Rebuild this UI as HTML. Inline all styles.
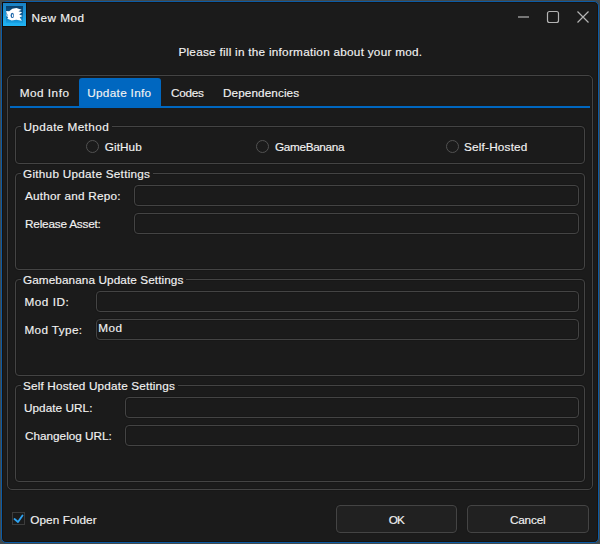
<!DOCTYPE html>
<html><head><meta charset="utf-8">
<style>
html,body{margin:0;padding:0;}
body{width:600px;height:544px;background:#414a4e;position:relative;overflow:hidden;font-family:"Liberation Sans",sans-serif;font-size:11.75px;color:#f2f2f2;-webkit-text-stroke:0.15px #f2f2f2;}
.win{position:absolute;left:1px;top:1px;width:598px;height:542px;box-sizing:border-box;border:1px solid #0b5ba6;border-radius:5px;background:#1b1b1b;box-shadow:inset 0 0 0 1px #18130e;}
.a{position:absolute;}
.t{position:absolute;line-height:14px;white-space:nowrap;}
.gb{position:absolute;box-sizing:border-box;border:1px solid #444444;border-radius:4px;box-shadow:0 0 0 1px #181818, inset 0 0 0 1px #181818;}
.gh{position:absolute;background:#1b1b1b;line-height:14px;white-space:nowrap;padding:0 3px 0 2px;}
.tb{position:absolute;box-sizing:border-box;border:1px solid #444444;border-radius:4px;background:#1b1b1b;box-shadow:0 0 0 1px #181818, inset 0 0 0 1px #181818;}
.rb{position:absolute;box-sizing:border-box;width:13px;height:13px;border:1.2px solid #525252;border-radius:50%;}
.btn{position:absolute;box-sizing:border-box;border:1px solid #444444;border-radius:4px;background:#212121;box-shadow:0 0 1px 0 #141414;}
</style></head><body>
<div class="win"></div>

<svg class="a" style="left:2px;top:2px" width="25" height="25" viewBox="0 0 25 25">
  <defs><linearGradient id="ig" x1="0" y1="0" x2="0" y2="1">
    <stop offset="0" stop-color="#0a3e68"/><stop offset="0.5" stop-color="#0f5f98"/><stop offset="1" stop-color="#18a4e8"/></linearGradient>
  <linearGradient id="fg" x1="0" y1="0" x2="0" y2="1">
    <stop offset="0" stop-color="#1a7fc2"/><stop offset="1" stop-color="#20b4f4"/></linearGradient></defs>
  <rect x="0" y="0" width="25" height="25" fill="#120c0a"/>
  <rect x="1" y="1" width="23" height="23" fill="url(#fg)"/>
  <rect x="4" y="4" width="17" height="17" fill="url(#ig)"/>
  <path d="M4.1 9.1 L7.2 9.3 L10.3 6.7 L14.4 6 L19.6 7.7 L16.5 9.3 L20.1 10.3 L17.2 12.4 L20.6 13.9 L17.7 15.3 L19.9 18.7 L14.4 17.7 L9.6 18.4 L5.3 16.8 L6.2 15.3 L4.8 13.9 L4.6 11.5 Z" fill="#ffffff"/>
  <ellipse cx="5.2" cy="13.2" rx="0.9" ry="1.5" fill="#9cc8e8"/>
  <ellipse cx="10.3" cy="13.4" rx="1.7" ry="2.6" fill="#1a64a8"/>
  <ellipse cx="10.6" cy="13.7" rx="0.7" ry="1.4" fill="#ffffff"/>
</svg>
<div class="t" id="t1" style="left:31.60px;top:11px;letter-spacing:0.467px;">New Mod</div>

<svg class="a" style="left:510px;top:5px" width="90" height="25" viewBox="0 0 90 25">
  <line x1="8" y1="12" x2="19" y2="12" stroke="#b4b4b4" stroke-width="1.2"/>
  <rect x="37.5" y="6.5" width="11" height="11" rx="2" fill="none" stroke="#b4b4b4" stroke-width="1.2"/>
  <path d="M67.5 6.5 L78.5 17.5 M78.5 6.5 L67.5 17.5" stroke="#b4b4b4" stroke-width="1.2" fill="none"/>
</svg>

<div class="t" id="t2" style="left:178.40px;top:45px;letter-spacing:0.262px;">Please fill in the information about your mod.</div>

<div class="a" style="left:7px;top:75px;width:586px;height:415px;box-sizing:border-box;border:1px solid #444444;border-radius:5px;box-shadow:0 0 0 1px #181818, inset 0 0 0 1px #181818;"></div>
<div class="a" style="left:79px;top:78px;width:82px;height:30px;background:#0067c0;border-radius:3px 3px 0 0;"></div>
<div class="a" style="left:10px;top:106px;width:580px;height:2px;background:#0067c0;"></div>
<div class="t" id="t3" style="left:19.80px;top:86px;letter-spacing:0.486px;">Mod Info</div>
<div class="t" id="t4" style="left:87.20px;top:86px;letter-spacing:0.320px;">Update Info</div>
<div class="t" id="t5" style="left:171.00px;top:86px;letter-spacing:-0.250px;">Codes</div>
<div class="t" id="t6" style="left:223.00px;top:86px;letter-spacing:0.091px;">Dependencies</div>

<div class="gb" style="left:15px;top:126px;width:570px;height:38px;"></div>
<div class="gh" id="t7" style="left:21.40px;top:120px;letter-spacing:0.413px;">Update Method</div>
<div class="rb" style="left:86px;top:140px;"></div>
<div class="t" id="t8" style="left:104.80px;top:140px;letter-spacing:0.060px;">GitHub</div>
<div class="rb" style="left:256px;top:140px;"></div>
<div class="t" id="t9" style="left:275.00px;top:140px;letter-spacing:-0.333px;">GameBanana</div>
<div class="rb" style="left:446px;top:140px;"></div>
<div class="t" id="t10" style="left:464.00px;top:140px;letter-spacing:0.200px;">Self-Hosted</div>

<div class="gb" style="left:15px;top:173px;width:570px;height:97px;"></div>
<div class="gh" id="t11" style="left:21.00px;top:167px;letter-spacing:0.262px;">Github Update Settings</div>
<div class="t" id="t12" style="left:25.00px;top:189px;letter-spacing:0.233px;">Author and Repo:</div>
<div class="tb" style="left:134px;top:185px;width:445px;height:21px;"></div>
<div class="t" id="t13" style="left:25.00px;top:217px;letter-spacing:-0.192px;">Release Asset:</div>
<div class="tb" style="left:134px;top:213px;width:445px;height:21px;"></div>

<div class="gb" style="left:15px;top:279px;width:570px;height:97px;"></div>
<div class="gh" id="t14" style="left:21.00px;top:273px;letter-spacing:0.090px;">Gamebanana Update Settings</div>
<div class="t" id="t15" style="left:24.40px;top:295px;letter-spacing:0.533px;">Mod ID:</div>
<div class="tb" style="left:96px;top:291px;width:483px;height:21px;"></div>
<div class="t" id="t16" style="left:24.40px;top:323px;letter-spacing:0.387px;">Mod Type:</div>
<div class="tb" style="left:96px;top:319px;width:483px;height:21px;"></div>
<div class="t" id="t17" style="left:98.20px;top:321px;letter-spacing:0.550px;">Mod</div>

<div class="gb" style="left:15px;top:385px;width:570px;height:97px;"></div>
<div class="gh" id="t18" style="left:21.00px;top:379px;letter-spacing:0.163px;">Self Hosted Update Settings</div>
<div class="t" id="t19" style="left:24.00px;top:401px;letter-spacing:0.050px;">Update URL:</div>
<div class="tb" style="left:125px;top:397px;width:454px;height:21px;"></div>
<div class="t" id="t20" style="left:25.00px;top:429px;letter-spacing:0.000px;">Changelog URL:</div>
<div class="tb" style="left:125px;top:425px;width:454px;height:21px;"></div>

<div class="a" style="left:12px;top:512px;width:13px;height:13px;box-sizing:border-box;border:1px solid #3c3c3c;"></div>
<svg class="a" style="left:12px;top:512px" width="13" height="13" viewBox="0 0 13 13">
  <path d="M2.5 7 L6 10 L10.5 3.5" fill="none" stroke="#2ea3f2" stroke-width="1.8" stroke-linecap="round" stroke-linejoin="round"/>
</svg>
<div class="t" id="t21" style="left:30.20px;top:513px;letter-spacing:0.110px;">Open Folder</div>

<div class="btn" style="left:336px;top:505px;width:121px;height:28px;"></div>
<div class="t" id="t22" style="left:388.80px;top:513px;letter-spacing:-1.000px;">OK</div>
<div class="btn" style="left:467px;top:505px;width:122px;height:28px;"></div>
<div class="t" id="t23" style="left:510.00px;top:513px;letter-spacing:-0.200px;">Cancel</div>
</body></html>
